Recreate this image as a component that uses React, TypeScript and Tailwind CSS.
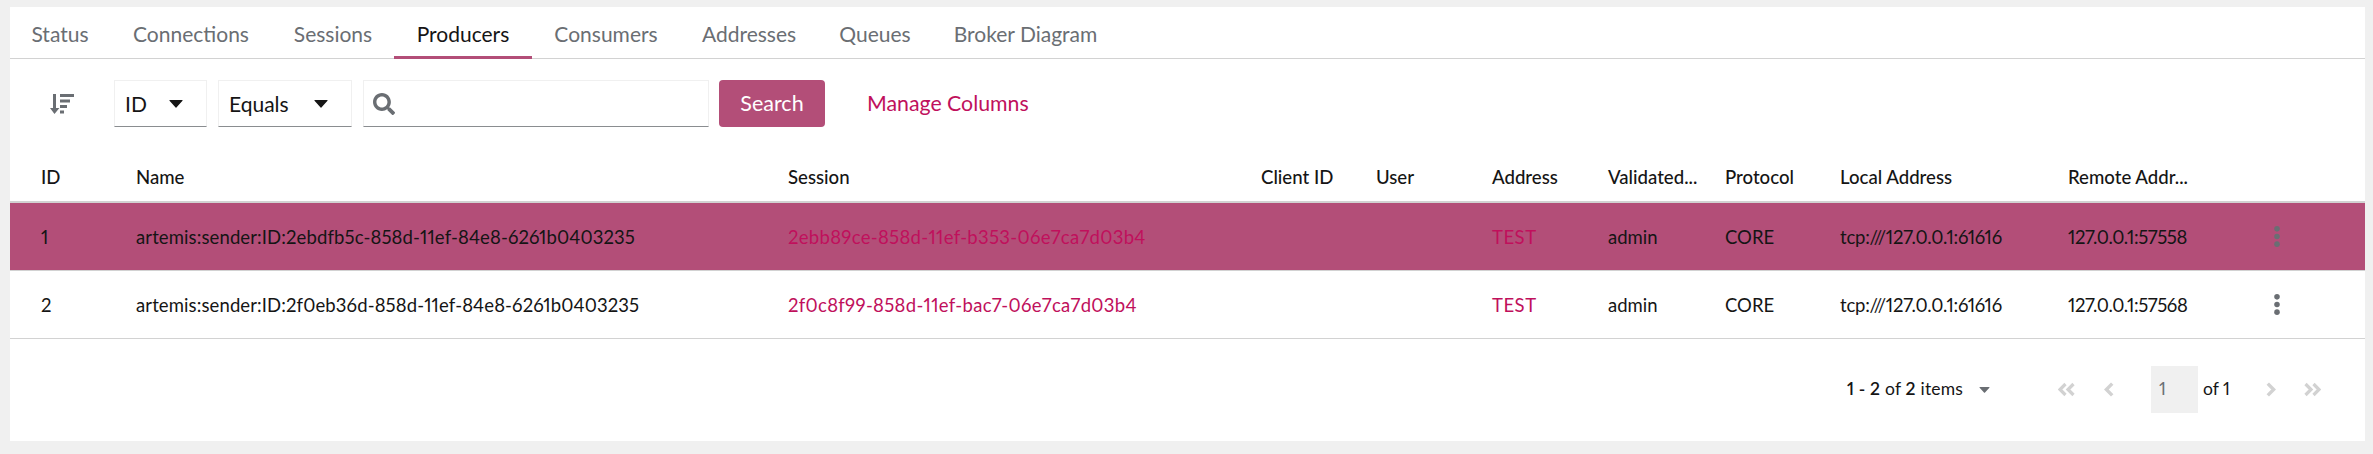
import React from "react";

const font = "font-['Lato','Noto_Sans',sans-serif]";
const tabs = [
  { label: "Status", w: "w-[100px]" },
  { label: "Connections", w: "w-[162px]" },
  { label: "Sessions", w: "w-[122px]" },
  { label: "Producers", w: "w-[138px]", active: true },
  { label: "Consumers", w: "w-[148px]" },
  { label: "Addresses", w: "w-[138px]" },
  { label: "Queues", w: "w-[114px]" },
  { label: "Broker Diagram", w: "w-[187px]" },
];
const heads = ["ID", "Name", "Session", "Client ID", "User", "Address", "Validated...", "Protocol", "Local Address", "Remote Addr..."];
const gridCols = "grid grid-cols-[95px_652px_473px_115px_116px_116px_117px_115px_228px_192px_1fr] pl-[31px] items-center";

const rows = [
  { id: "1", name: "artemis:sender:ID:2ebdfb5c-858d-11ef-84e8-6261b0403235", session: "2ebb89ce-858d-11ef-b353-06e7ca7d03b4", remote: "127.0.0.1:57558", selected: true },
  { id: "2", name: "artemis:sender:ID:2f0eb36d-858d-11ef-84e8-6261b0403235", session: "2f0c8f99-858d-11ef-bac7-06e7ca7d03b4", remote: "127.0.0.1:57568", selected: false },
];

function Caret({ className }: { className: string }) {
  return (
    <svg viewBox="0 0 10 6" className={className} fill="currentColor">
      <path d="M0.4 0h9.2c.35 0 .5.4.27.65L5.3 5.7a.4.4 0 0 1-.6 0L.13.65C-.1.4.05 0 .4 0z" />
    </svg>
  );
}

function Chevron({ dbl, left }: { dbl?: boolean; left?: boolean }) {
  return (
    <svg viewBox={dbl ? "0 0 18 14" : "0 0 9 14"} className={dbl ? "h-[15px] w-[18px] text-[#d2d2d2]" : "h-[15px] w-[10px] text-[#d2d2d2]"} fill="none" stroke="currentColor" strokeWidth="3.2" style={left ? undefined : { transform: "scaleX(-1)" }}>
      <path d="M7.5 1.5 2 7l5.500 5.500" />
      {dbl && <path d="M15.5 1.5 10 7l5.500 5.500" />}
    </svg>
  );
}

function Kebab() {
  return (
    <svg viewBox="0 0 8 22" className="h-[21px] w-[8px] text-[#6a6e73]" fill="currentColor">
      <circle cx="4" cy="3" r="2.9" />
      <circle cx="4" cy="11" r="2.9" />
      <circle cx="4" cy="19" r="2.9" />
    </svg>
  );
}

function Select({ label, width }: { label: string; width: string }) {
  return (
    <div className={`${width} flex h-[47px] items-center justify-between border border-[#f0f0f0] border-b-[#8a8d90] pl-[10px] pr-[23px] text-[21px] text-[#151515]`}>
      <span>{label}</span>
      <Caret className="h-[8px] w-[14px] text-[#151515]" />
    </div>
  );
}

export default function App() {
  return (
    <div className={`${font} h-[454px] bg-[#f0f0f0] pb-[13px] pl-[10px] pr-[8px] pt-[7px]`}>
      <div className="flex h-[434px] flex-col bg-white">
        <div className="flex h-[52px] border-b border-[#d2d2d2] text-[21px] text-[#6a6e73]">
          {tabs.map((t) => (
            <div key={t.label} className={`${t.w} h-[52px] pt-[11px] text-center ${t.active ? "border-b-[3px] border-[#b34e78] text-[#151515]" : ""}`}>
              {t.label}
            </div>
          ))}
        </div>

        <div className="mt-[21px] flex h-[47px] items-center">
          <svg viewBox="0 0 24 22" className="ml-[40px] mr-[40px] h-[22px] w-[24px] text-[#6a6e73]" fill="currentColor">
            <path d="M3 1h3v14h3.4L4.5 21 0 15h3z" />
            <rect x="10" y="1" width="14" height="3" />
            <rect x="10" y="6.5" width="10" height="3" />
            <rect x="10" y="12" width="7" height="3" />
            <rect x="10" y="17.5" width="4" height="3" />
          </svg>
          <Select label="ID" width="w-[93px]" />
          <div className="w-[11px]" />
          <Select label="Equals" width="w-[134px]" />
          <div className="ml-[11px] flex h-[47px] w-[346px] items-center border border-[#f0f0f0] border-b-[#8a8d90] pl-[9px]">
            <svg viewBox="0 0 512 512" className="h-[22px] w-[22px] text-[#6a6e73]" fill="currentColor">
              <path d="M505 442.7 405.3 343c-4.5-4.5-10.6-7-17-7H372c27.6-35.3 44-79.7 44-128C416 93.1 322.9 0 208 0S0 93.1 0 208s93.1 208 208 208c48.3 0 92.7-16.4 128-44v16.3c0 6.400 2.500 12.500 7 17l99.700 99.700c9.400 9.400 24.600 9.400 33.900 0l28.300-28.300c9.400-9.400 9.400-24.600.1-34zM208 336c-70.700 0-128-57.200-128-128 0-70.700 57.200-128 128-128 70.700 0 128 57.200 128 128 0 70.700-57.200 128-128 128z" />
            </svg>
          </div>
          <button className="ml-[10px] h-[47px] w-[106px] rounded-[4px] bg-[#b34e78] text-[21.5px] text-white">Search</button>
          <span className="ml-[42px] pt-[1px] text-[21.3px] text-[#c0105c]">Manage Columns</span>
        </div>

        <div className={`${gridCols} mt-[26px] h-[50px] border-b-2 border-[#d2d2d2] pt-[1px] text-[18.6px] font-medium text-[#151515]`}>
          {heads.map((h) => (
            <div key={h}>{h}</div>
          ))}
        </div>

        {rows.map((r) => (
          <div key={r.id} className={`${gridCols} h-[68px] border-b border-[#d2d2d2] text-[18.5px] text-[#151515] proportional-nums ${r.selected ? "bg-[#b34e78]" : "bg-white"}`}>
            <div className="pt-[3px]">{r.id}</div>
            <div className="pt-[3px] tracking-[0.11px]">{r.name}</div>
            <div className="pt-[3px] tracking-[0.3px] text-[#c0105c]">{r.session}</div>
            <div />
            <div />
            <div className="pt-[3px] tracking-[0.5px] text-[#c0105c]">TEST</div>
            <div className="pt-[3px]">admin</div>
            <div className="pt-[3px]">CORE</div>
            <div className="pt-[3px] tracking-[-0.2px]">tcp:///127.0.0.1:61616</div>
            <div className="pt-[3px] tracking-[-0.4px]">{r.remote}</div>
            <div className="pl-[13px]">
              <Kebab />
            </div>
          </div>
        ))}

        <div className="mt-[27px] flex h-[47px] items-center text-[17.5px] text-[#151515] proportional-nums">
          <div className="ml-[1837px] flex w-[143px] items-center justify-between">
            <span className="tracking-[0.2px]">
              <b className="font-semibold">1 - 2</b> of <b className="font-semibold">2</b> items
            </span>
            <Caret className="h-[6px] w-[11px] text-[#6a6e73]" />
          </div>
          <div className="ml-[68px]">
            <Chevron dbl left />
          </div>
          <div className="ml-[28px]">
            <Chevron left />
          </div>
          <div className="ml-[37px] flex h-[47px] w-[47px] items-center bg-[#f0f0f0] pl-[8px] text-[#6a6e73]">1</div>
          <span className="ml-[5px]">of 1</span>
          <div className="ml-[36px]">
            <Chevron />
          </div>
          <div className="ml-[27px]">
            <Chevron dbl />
          </div>
        </div>
      </div>
    </div>
  );
}
